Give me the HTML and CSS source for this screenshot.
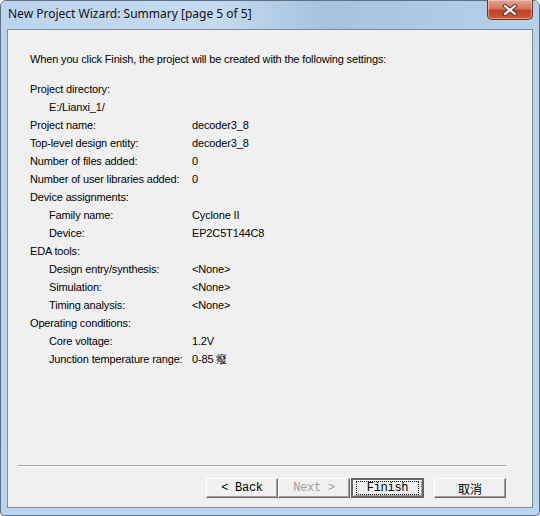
FILE: index.html
```html
<!DOCTYPE html>
<html lang="en">
<head>
    <meta charset="UTF-8">
    <title>New Project Wizard: Summary</title>
    <link rel="stylesheet" href="styles.css">
</head>
<body>

<div class="window">
    <!-- Title bar -->
    <div class="titlebar">
        <span class="title">New Project Wizard: Summary [page 5 of 5]</span>
        <div class="close-btn">
            <svg width="16" height="12" viewBox="0 0 16 12">
                <path d="M3 2 L13 10 M13 2 L3 10" stroke="#4a2a24" stroke-width="4" stroke-linecap="square"/>
                <path d="M3 2 L13 10 M13 2 L3 10" stroke="#ffffff" stroke-width="2.2" stroke-linecap="square"/>
            </svg>
        </div>
    </div>

    <!-- Client area -->
    <div class="client">
        <p class="intro">When you click Finish, the project will be created with the following settings:</p>

        <div class="summary">
            <div class="row"><span class="label">Project directory:</span></div>
            <div class="row sub"><span class="label">E:/Lianxi_1/</span></div>
            <div class="row"><span class="label">Project name:</span><span class="value">decoder3_8</span></div>
            <div class="row"><span class="label">Top-level design entity:</span><span class="value">decoder3_8</span></div>
            <div class="row"><span class="label">Number of files added:</span><span class="value">0</span></div>
            <div class="row"><span class="label">Number of user libraries added:</span><span class="value">0</span></div>
            <div class="row"><span class="label">Device assignments:</span></div>
            <div class="row sub"><span class="label">Family name:</span><span class="value">Cyclone II</span></div>
            <div class="row sub"><span class="label">Device:</span><span class="value">EP2C5T144C8</span></div>
            <div class="row"><span class="label">EDA tools:</span></div>
            <div class="row sub"><span class="label">Design entry/synthesis:</span><span class="value">&lt;None&gt;</span></div>
            <div class="row sub"><span class="label">Simulation:</span><span class="value">&lt;None&gt;</span></div>
            <div class="row sub"><span class="label">Timing analysis:</span><span class="value">&lt;None&gt;</span></div>
            <div class="row"><span class="label">Operating conditions:</span></div>
            <div class="row sub"><span class="label">Core voltage:</span><span class="value">1.2V</span></div>
            <div class="row sub"><span class="label">Junction temperature range:</span><span class="value">0-85 癈</span></div>
        </div>

        <!-- Buttons -->
        <div class="footer">
            <div class="separator"></div>
            <div class="buttons">
                <button class="btn">&lt; Back</button>
                <button class="btn" disabled>Next &gt;</button>
                <button class="btn default"><span class="focus">Finish</span></button>
                <button class="btn cancel">取消</button>
            </div>
        </div>
    </div>
</div>

</body>
</html>
```

FILE: styles.css
```css
body {
    margin: 0;
    width: 540px;
    height: 516px;
    overflow: hidden;
    background-color: #ffffff;
}

.window {
    box-sizing: border-box;
    width: 540px;
    height: 516px;
    display: flex;
    flex-direction: column;
    border: 1px solid #5f7186;
    border-radius: 6px 6px 4px 4px;
    background: linear-gradient(180deg, #c3d9ef 0%, #b9d1ea 6%, #bcd5ee 100%);
}

.titlebar {
    height: 28px;
    display: flex;
    justify-content: space-between;
    align-items: flex-start;
    padding-left: 7px;
    background: linear-gradient(90deg, #bcd4ee 0%, #c5daf0 40%, #a7c2df 60%, #b8d0ea 100%);
    border-radius: 5px 5px 0 0;
}

.title {
    font-family: "Noto Sans", "DejaVu Sans", sans-serif;
    font-size: 12px;
    line-height: 28px;
    color: #111111;
    margin-top: -1px;
}

.close-btn {
    box-sizing: border-box;
    width: 46px;
    height: 20px;
    margin-right: 6px;
    margin-top: -1px;
    display: flex;
    align-items: center;
    justify-content: center;
    border: 1px solid #5b3a34;
    border-top: none;
    border-radius: 0 0 5px 5px;
    background: linear-gradient(180deg, #e8a596 0%, #d6765f 45%, #c14325 55%, #cc5a3a 100%);
    box-shadow: inset 0 0 0 1px rgba(255, 220, 210, 0.5);
}

.client {
    box-sizing: border-box;
    flex: 1;
    margin: 0 6px 7px 6px;
    border: 1px solid #7e8c9c;
    background-color: #f0f0f0;
    display: flex;
    flex-direction: column;
    font-family: "Liberation Sans", Arial, sans-serif;
    font-size: 11px;
    letter-spacing: -0.15px;
    color: #000000;
}

.intro {
    margin: 22px 0 0 22px;
    line-height: 14px;
}

.summary {
    margin-top: 14px;
    padding-left: 22px;
}

.row {
    display: flex;
    height: 18px;
    line-height: 18px;
}

.row .label {
    width: 162px;
    white-space: nowrap;
}

.row.sub .label {
    padding-left: 19px;
    width: 143px;
}

.footer {
    margin-top: auto;
    padding: 0 26px 9px 10px;
}

.separator {
    height: 0;
    border-top: 1px solid #a0a0a0;
    border-bottom: 1px solid #ffffff;
    margin-bottom: 11px;
}

.buttons {
    display: flex;
    justify-content: flex-end;
}

.btn {
    box-sizing: border-box;
    width: 72px;
    height: 20px;
    padding: 0;
    background-color: #f0f0f0;
    border: 1px solid;
    border-color: #ffffff #696969 #696969 #ffffff;
    box-shadow: inset -1px -1px 0 #a0a0a0;
    font-family: "Liberation Mono", "Noto Sans CJK SC", monospace;
    font-size: 12px;
    letter-spacing: -0.3px;
    color: #000000;
    display: flex;
    align-items: center;
    justify-content: center;
}

.btn:disabled {
    color: #a0a0a0;
}

.btn.default {
    width: 73px;
    margin-left: 1px;
    border: 2px solid #646464;
    box-shadow: inset 1px 1px 0 #ffffff, inset -1px -1px 0 #a0a0a0;
}

.focus {
    box-sizing: border-box;
    width: 63px;
    height: 14px;
    line-height: 12px;
    border: 1px dotted #000000;
    text-align: center;
}

.btn.cancel {
    margin-left: 10px;
    font-family: "Noto Sans CJK SC", sans-serif;
    font-size: 12px;
    letter-spacing: 0;
}
```
